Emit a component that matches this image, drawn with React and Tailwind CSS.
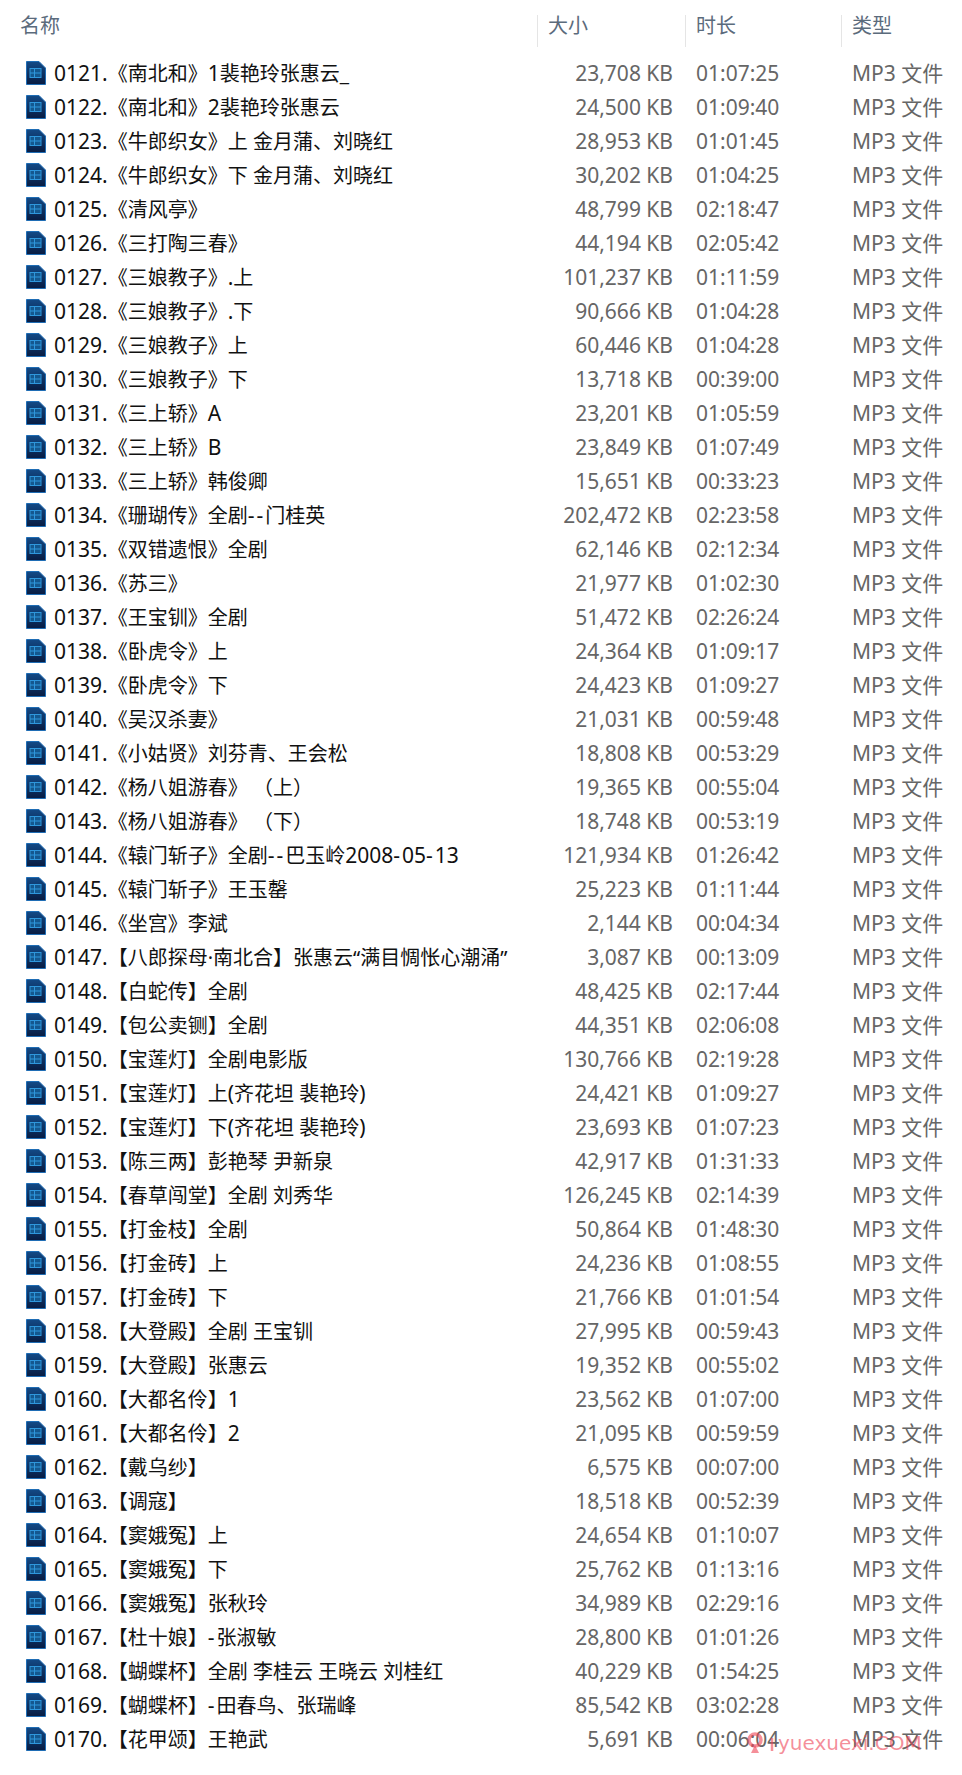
const ROWS = [
  ["0121.《南北和》1裴艳玲张惠云_", "23,708 KB", "01:07:25"],
  ["0122.《南北和》2裴艳玲张惠云", "24,500 KB", "01:09:40"],
  ["0123.《牛郎织女》上 金月蒲、刘晓红", "28,953 KB", "01:01:45"],
  ["0124.《牛郎织女》下 金月蒲、刘晓红", "30,202 KB", "01:04:25"],
  ["0125.《清风亭》", "48,799 KB", "02:18:47"],
  ["0126.《三打陶三春》", "44,194 KB", "02:05:42"],
  ["0127.《三娘教子》.上", "101,237 KB", "01:11:59"],
  ["0128.《三娘教子》.下", "90,666 KB", "01:04:28"],
  ["0129.《三娘教子》上", "60,446 KB", "01:04:28"],
  ["0130.《三娘教子》下", "13,718 KB", "00:39:00"],
  ["0131.《三上轿》A", "23,201 KB", "01:05:59"],
  ["0132.《三上轿》B", "23,849 KB", "01:07:49"],
  ["0133.《三上轿》韩俊卿", "15,651 KB", "00:33:23"],
  ["0134.《珊瑚传》全剧--门桂英", "202,472 KB", "02:23:58"],
  ["0135.《双错遗恨》全剧", "62,146 KB", "02:12:34"],
  ["0136.《苏三》", "21,977 KB", "01:02:30"],
  ["0137.《王宝钏》全剧", "51,472 KB", "02:26:24"],
  ["0138.《卧虎令》上", "24,364 KB", "01:09:17"],
  ["0139.《卧虎令》下", "24,423 KB", "01:09:27"],
  ["0140.《吴汉杀妻》", "21,031 KB", "00:59:48"],
  ["0141.《小姑贤》刘芬青、王会松", "18,808 KB", "00:53:29"],
  ["0142.《杨八姐游春》 （上）", "19,365 KB", "00:55:04"],
  ["0143.《杨八姐游春》 （下）", "18,748 KB", "00:53:19"],
  ["0144.《辕门斩子》全剧--巴玉岭2008-05-13", "121,934 KB", "01:26:42"],
  ["0145.《辕门斩子》王玉罄", "25,223 KB", "01:11:44"],
  ["0146.《坐宫》李斌", "2,144 KB", "00:04:34"],
  ["0147.【八郎探母·南北合】张惠云“满目惆怅心潮涌”", "3,087 KB", "00:13:09"],
  ["0148.【白蛇传】全剧", "48,425 KB", "02:17:44"],
  ["0149.【包公卖铡】全剧", "44,351 KB", "02:06:08"],
  ["0150.【宝莲灯】全剧电影版", "130,766 KB", "02:19:28"],
  ["0151.【宝莲灯】上(齐花坦 裴艳玲)", "24,421 KB", "01:09:27"],
  ["0152.【宝莲灯】下(齐花坦 裴艳玲)", "23,693 KB", "01:07:23"],
  ["0153.【陈三两】彭艳琴 尹新泉", "42,917 KB", "01:31:33"],
  ["0154.【春草闯堂】全剧 刘秀华", "126,245 KB", "02:14:39"],
  ["0155.【打金枝】全剧", "50,864 KB", "01:48:30"],
  ["0156.【打金砖】上", "24,236 KB", "01:08:55"],
  ["0157.【打金砖】下", "21,766 KB", "01:01:54"],
  ["0158.【大登殿】全剧 王宝钏", "27,995 KB", "00:59:43"],
  ["0159.【大登殿】张惠云", "19,352 KB", "00:55:02"],
  ["0160.【大都名伶】1", "23,562 KB", "01:07:00"],
  ["0161.【大都名伶】2", "21,095 KB", "00:59:59"],
  ["0162.【戴乌纱】", "6,575 KB", "00:07:00"],
  ["0163.【调寇】", "18,518 KB", "00:52:39"],
  ["0164.【窦娥冤】上", "24,654 KB", "01:10:07"],
  ["0165.【窦娥冤】下", "25,762 KB", "01:13:16"],
  ["0166.【窦娥冤】张秋玲", "34,989 KB", "02:29:16"],
  ["0167.【杜十娘】-张淑敏", "28,800 KB", "01:01:26"],
  ["0168.【蝴蝶杯】全剧 李桂云 王晓云 刘桂红", "40,229 KB", "01:54:25"],
  ["0169.【蝴蝶杯】-田春鸟、张瑞峰", "85,542 KB", "03:02:28"],
  ["0170.【花甲颂】王艳武", "5,691 KB", "00:06:04"],
];

// latin runs sit a bit bigger than the CJK ones in the reference, hyphens are wider still
function Mixed({ text }) {
  const parts = text.match(/-+|[\x21-\x2c\x2e-\x7e]+|[^\x21-\x7e]+/g) || [];
  return parts.map((part, i) => {
    if (part[0] === "-") {
      return <span key={i} className="text-[21px] tracking-[2px]">{part}</span>;
    }
    if (part.charCodeAt(0) < 128 && part !== " ") {
      return <span key={i} className="text-[21px]">{part}</span>;
    }
    return <span key={i}>{part}</span>;
  });
}

function FileIcon() {
  return (
    <svg width="20" height="24" viewBox="0 0 20 24" className="shrink-0">
      <defs>
        <linearGradient id="mp3fill" x1="0" y1="0" x2="0" y2="1">
          <stop offset="0" stopColor="#134a86" />
          <stop offset="1" stopColor="#081c42" />
        </linearGradient>
      </defs>
      <path d="M.5.5h12.5l6.5 6.5v16.5H.5z" fill="url(#mp3fill)" stroke="#1f6db5" strokeWidth="1" />
      <rect x="4" y="7.5" width="11" height="9" fill="#14588f" stroke="#2f97dc" strokeWidth="1" />
      <path d="M4 12h11M8.5 7.5v9" stroke="#2f97dc" strokeWidth="1" />
    </svg>
  );
}

function HeaderCell({ label }) {
  return (
    <div className="h-[32px] border-l border-[#e5e5e5] pl-[10px] text-[20px] leading-[22px] text-[#5b6b7c]">
      {label}
    </div>
  );
}

export default function App() {
  return (
    <div className="relative h-[1775px] w-[962px] overflow-hidden bg-white font-['Noto_Sans','Noto_Sans_CJK_SC',sans-serif]">
      <div className="grid grid-cols-[537px_148px_156px_121px] pt-[15px]">
        <div className="h-[32px] pl-[20px] text-[20px] leading-[22px] text-[#5b6b7c]">名称</div>
        <HeaderCell label="大小" />
        <HeaderCell label="时长" />
        <HeaderCell label="类型" />
      </div>
      <div className="mt-[9px]">
        {ROWS.map(([name, size, length]) => (
          <div key={name} className="grid h-[34px] grid-cols-[537px_136px_23px_156px_110px] items-center text-[20px] leading-[28px]">
            <div className="flex items-center gap-[8px] whitespace-pre pl-[26px] text-[#111111]">
              <FileIcon />
              <div><Mixed text={name} /></div>
            </div>
            <div className="text-right text-[21px] text-[#666666]">{size}</div>
            <div />
            <div className="text-[21px] text-[#666666]">{length}</div>
            <div className="whitespace-pre text-[#666666]"><Mixed text="MP3 文件" /></div>
          </div>
        ))}
      </div>
      <div className="absolute left-[746px] top-[1731px] flex items-center gap-[1px] text-[#ee4455]/60">
        <svg width="31" height="24" viewBox="0 0 31 24" className="shrink-0">
          <circle cx="9" cy="9" r="6" fill="none" stroke="currentColor" strokeWidth="3.5" />
          <path d="M9 14l4 8H5z" fill="currentColor" />
          <path d="M26 7v13" stroke="currentColor" strokeWidth="2.5" />
        </svg>
        <span className="font-['DejaVu_Sans',sans-serif] text-[20px] leading-[24px]">yuexuexi.COM</span>
      </div>
    </div>
  );
}
